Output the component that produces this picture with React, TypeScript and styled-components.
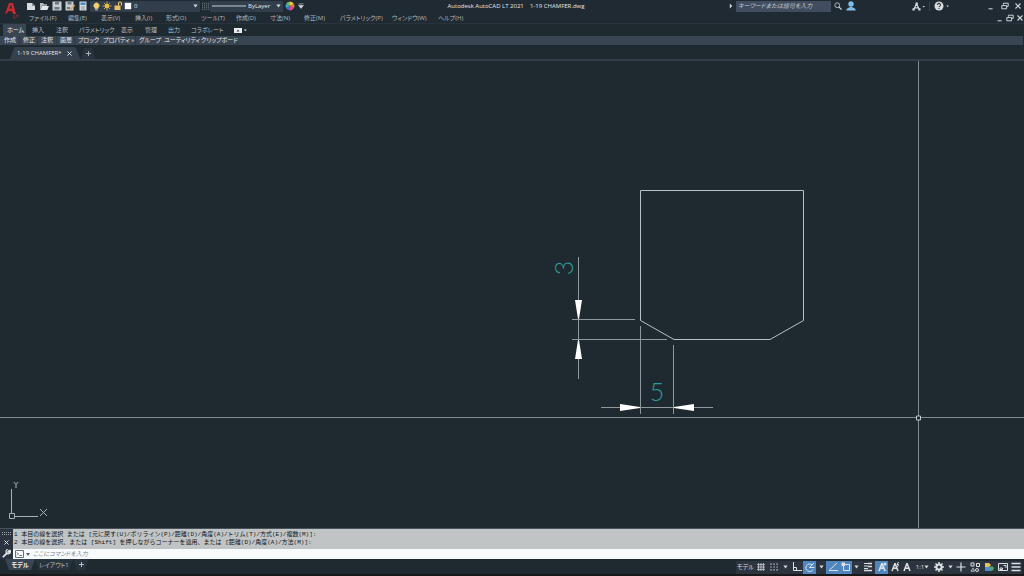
import React from 'react';
import styled, { createGlobalStyle, css } from 'styled-components';

const GlobalStyle = createGlobalStyle`
  * { box-sizing: border-box; }
  body {
    margin: 0;
    background: #1f2930;
    color: #c0c5c9;
    font-family: "Open Sans", "Noto Sans CJK JP", sans-serif;
    font-size: 6px;
    line-height: 10px;
    font-feature-settings: "palt";
  }
  button, input, select {
    font: inherit;
    font-feature-settings: inherit;
    color: inherit;
    background: none;
    border: 0;
    margin: 0;
    padding: 0;
    border-radius: 0;
    outline: 0;
  }
  svg { display: block; flex: none; }
`;

const Page = styled.div`
  display: flex;
  flex-direction: column;
  min-height: 100vh;
  overflow: hidden;
`;

const Top = styled.header`
  display: flex;
  background: #202a32;
  border-bottom: 1px solid #29333d;
`;

const AppButton = styled.button`
  width: 24px;
  height: 22px;
  flex: none;
`;

const TopRows = styled.div`
  flex: 1;
  min-width: 0;
`;

const TitleRow = styled.div`
  display: flex;
  align-items: center;
  height: 12px;
`;

const TitleSide = styled.div<{ $end?: boolean }>`
  display: flex;
  align-items: center;
  flex: 1 1 ${(p) => (p.$end ? 16 : 0)}px;
  justify-content: ${(p) => (p.$end ? 'flex-end' : 'flex-start')};
`;

const Title = styled.h1`
  margin: 0;
  font-size: 6px;
  font-weight: 500;
  white-space: pre;
  color: #e4e7e9;
`;

const ToolButton = styled.button<{ $w?: number }>`
  display: flex;
  align-items: center;
  justify-content: center;
  width: ${(p) => p.$w ?? 13}px;
  height: 11px;
  flex: none;
  color: #d5d9dc;
`;

const Combo = styled.label<{ $w: number }>`
  display: flex;
  align-items: center;
  width: ${(p) => p.$w}px;
  height: 11px;
  margin-right: 1px;
  padding: 0 2px;
  gap: 1px;
  background: #333e4c;
  color: #e4e7e9;
`;

const Picker = styled.select`
  appearance: none;
  flex: 1;
  min-width: 0;
  height: 10px;
  padding-left: 1px;
  line-height: 10px;
`;

const Search = styled.input`
  width: 95px;
  height: 11px;
  padding: 0 2px;
  background: #414d5e;
  &::placeholder { color: #c4cad0; font-style: italic; opacity: 1; }
`;

const Divider = styled.span`
  width: 1px;
  height: 9px;
  margin: 0 2px;
  background: #36414c;
`;

const MenuRow = styled.nav`
  display: flex;
  align-items: center;
  height: 11px;
  padding-left: 5px;
`;

const MenuItem = styled.button<{ $w: number }>`
  width: ${(p) => p.$w}px;
  flex: none;
  text-align: left;
  white-space: nowrap;
  color: #b3b9bd;
`;

const Spacer = styled.span<{ $w?: number }>`
  flex: ${(p) => (p.$w ? `0 0 ${p.$w}px` : '1')};
`;

const RibbonTabs = styled.div`
  display: flex;
  align-items: center;
  height: 12px;
  padding-left: 3px;
`;

const RibbonTab = styled.button<{ $w: number; $active?: boolean }>`
  width: ${(p) => p.$w}px;
  height: 12px;
  flex: none;
  padding-left: 4px;
  text-align: left;
  line-height: 12px;
  white-space: nowrap;
  color: #b9bfc3;
  ${(p) => p.$active && css`
    margin-right: 2px;
    background: #3a4553;
    color: #eceef0;
  `}
`;

const PanelRow = styled.div`
  display: flex;
  height: 9px;
  margin-right: 1px;
  padding-left: 1px;
  background: #3a4553;
`;

const Panel = styled.button<{ $w: number }>`
  width: ${(p) => p.$w}px;
  height: 9px;
  padding-left: 3px;
  line-height: 9px;
  text-align: left;
  white-space: nowrap;
  color: #e4e7e9;
  border-right: 1px solid #2f3945;
`;

const FileTabs = styled.div`
  display: flex;
  align-items: flex-end;
  height: 16px;
  padding-left: 10px;
  border-bottom: 2px solid #343d49;
`;

const FileTab = styled.div`
  display: flex;
  align-items: center;
  justify-content: space-between;
  width: 70px;
  height: 12px;
  padding: 0 8px 0 7px;
  background: #35404d;
  clip-path: polygon(0 100%, 4px 1px, 6px 0, calc(100% - 6px) 0, calc(100% - 4px) 1px, 100% 100%);
  color: #e4e7e9;
`;

const AddTab = styled.button`
  display: flex;
  align-items: center;
  justify-content: center;
  width: 14px;
  height: 11px;
  margin-left: 1px;
  background: #2a343e;
  clip-path: polygon(0 100%, 3px 0, calc(100% - 3px) 0, 100% 100%);
  color: #a9b0b5;
`;

const Canvas = styled.main`
  position: relative;
  flex: 1;
  min-height: 370px;
  overflow: hidden;
  background: #1f2a30;
`;

const Sheet = styled.svg`
  position: absolute;
  inset: 0;
  width: 100%;
  height: 100%;
`;

const UcsIcon = styled.svg`
  position: absolute;
  left: 8px;
  bottom: 0;
`;

const CommandArea = styled.section`
  display: flex;
  border-top: 1px solid #49535d;
`;

const CommandRail = styled.div`
  display: flex;
  flex-direction: column;
  align-items: center;
  justify-content: space-between;
  width: 13px;
  padding: 3px 0 1px;
  background: #2a333f;
  color: #e6e9eb;
`;

const CommandBody = styled.div`
  flex: 1;
  min-width: 0;
`;

const History = styled.div`
  height: 20px;
  padding: 2px 1px 0;
  background: #c1c4c4;
  color: #12171a;
  font-family: "Liberation Mono", "Noto Sans CJK JP", monospace;
  font-feature-settings: normal;
  line-height: 8px;
  white-space: pre;
  overflow: hidden;
`;

const Prompt = styled.label`
  display: flex;
  align-items: center;
  gap: 2px;
  height: 10px;
  padding-left: 2px;
  background: #f8fbfc;
  color: #555f66;
`;

const PromptInput = styled.input`
  flex: 1;
  height: 10px;
  margin-left: 1px;
  &::placeholder { color: #7b8388; font-style: italic; opacity: 1; }
`;

const Footer = styled.footer`
  display: flex;
  align-items: flex-start;
  justify-content: space-between;
  height: 17px;
  padding: 0 2px 0 5px;
  border-bottom: 2px solid #18191b;
  background: #1f2930;
`;

const LayoutTabs = styled.div`
  display: flex;
`;

const LayoutTab = styled.button<{ $w: number; $active?: boolean }>`
  display: flex;
  align-items: center;
  justify-content: center;
  width: ${(p) => p.$w}px;
  height: 11px;
  white-space: nowrap;
  background: ${(p) => (p.$active ? '#3a4553' : '#29333d')};
  color: ${(p) => (p.$active ? '#f0f2f3' : '#b9bfc3')};
  font-weight: ${(p) => (p.$active ? 600 : 400)};
  clip-path: polygon(0 0, 100% 0, calc(100% - 4px) 100%, 4px 100%);
`;

const StatusBar = styled.div`
  display: flex;
  align-items: center;
  height: 15px;
  padding-top: 1px;
`;

const StatusButton = styled.button<{ $w: number; $on?: boolean }>`
  display: flex;
  align-items: center;
  justify-content: center;
  width: ${(p) => p.$w}px;
  height: 13px;
  flex: none;
  white-space: nowrap;
  color: #dde0e3;
  background: ${(p) => (p.$on ? '#4f86bd' : '#2b343f')};
`;

const Caret = () => (
  <svg width="5" height="4" viewBox="0 0 5 4"><path d="M.4.5h4.2L2.5 3.5z" fill="#d5d9dc" /></svg>
);

const Plus = () => (
  <svg width="5" height="5" viewBox="0 0 5 5"><path d="M2.5 0v5M0 2.5h5" stroke="currentColor" /></svg>
);

const Cross = ({ size = 5 }: { size?: number }) => (
  <svg width={size} height={size} viewBox="0 0 6 6"><path d="M.5.5l5 5M5.5.5l-5 5" stroke="currentColor" strokeWidth="1.1" /></svg>
);

type IconProps = { children: React.ReactNode; size?: number };
const Icon = ({ children, size = 10 }: IconProps) => (
  <svg width={size} height={size} viewBox="0 0 10 10" fill="none" stroke="currentColor">{children}</svg>
);

const WindowButtons = ({ widths }: { widths: number[] }) => (
  <>
    <ToolButton $w={widths[0]} aria-label="最小化"><Icon size={8}><path d="M2 8.5h5" strokeWidth="1.3" /></Icon></ToolButton>
    <ToolButton $w={widths[1]} aria-label="元に戻す">
      <Icon size={8}><path d="M3 3.5V1.5h6v4H7.5M1 4.5h6v4H1z" strokeWidth="1.2" /></Icon>
    </ToolButton>
    <ToolButton $w={widths[2]} aria-label="閉じる"><Cross size={6} /></ToolButton>
  </>
);

const menus: [string, number][] = [
  ['ファイル(F)', 39], ['編集(E)', 33], ['表示(V)', 34], ['挿入(I)', 31], ['形式(O)', 35], ['ツール(T)', 35],
  ['作成(D)', 34], ['寸法(N)', 34], ['修正(M)', 36], ['パラメトリック(P)', 52], ['ウィンドウ(W)', 46], ['ヘルプ(H)', 30],
];

const ribbonTabs: [string, number][] = [
  ['ホーム', 23], ['挿入', 24], ['注釈', 23], ['パラメトリック', 42], ['表示', 24], ['管理', 23], ['出力', 23], ['コラボレート', 44],
];

const panels: [string, number][] = [
  ['作成', 19], ['修正', 18], ['注釈', 19], ['画層', 18], ['ブロック', 25], ['プロパティ »', 36],
  ['グループ', 25], ['ユーティリティ', 37], ['クリップボード', 40],
];

const scaleFigure = 'M5 1.2L2 9M5 1.2L8 9M3.2 6.2h3.6';

export default function App() {
  return (
    <Page>
      <GlobalStyle />
      <Top>
        <AppButton aria-label="アプリケーション メニュー">
          <svg width="24" height="22" viewBox="0 0 24 22">
            <path d="M5 14L9 3h4l3 11h-3l-1-3H8.500l-1 2z" fill="#c92a2f" />
            <path d="M9.300 8.500L11 4.500l1 4z" fill="#202a32" />
            <path d="M5 14l3-2.500 4-.5-4 1.300z" fill="#7e1c22" />
            <path d="M14 15v3h1.500M16.200 15.300h2M17.200 15v3" fill="none" stroke="#b5282d" strokeWidth=".8" />
          </svg>
        </AppButton>
        <TopRows>
          <TitleRow>
            <TitleSide>
              <ToolButton aria-label="新規">
                <Icon><path d="M1 2h5l3 3v4H1z" fill="#d9dcde" stroke="none" /><path d="M6 2v3h3z" fill="#8a9299" stroke="none" /></Icon>
              </ToolButton>
              <ToolButton aria-label="開く">
                <Icon><path d="M1 8.500V2h3l1 1.200h3v1.500H3z" fill="#b5bbbf" stroke="none" /><path d="M3 5h7L8.300 9H1z" fill="#e4e6e8" stroke="none" /></Icon>
              </ToolButton>
              <ToolButton aria-label="上書き保存">
                <Icon><path d="M.5.5h9v9h-9z" fill="#c8cdd0" stroke="none" /><path d="M3 1h4v2.500H3zM2.500 6h5v2.500h-5z" fill="#6d7780" stroke="none" /></Icon>
              </ToolButton>
              <ToolButton aria-label="名前を付けて保存">
                <Icon><path d="M.5.5h8v9h-8z" fill="#c8cdd0" stroke="none" /><path d="M2.500 1h4v2.500h-4zM2 6h3v2H2z" fill="#6d7780" stroke="none" /><path d="M5 9L9.500 4" stroke="#e0a667" strokeWidth="1.800" /></Icon>
              </ToolButton>
              <ToolButton $w={14} aria-label="印刷">
                <Icon><path d="M1.500.5h7v9h-7z" fill="#d9dcde" stroke="none" /><path d="M2.500 1.500h5v2.500h-5z" fill="#4a8cc4" stroke="none" /><path d="M3 6h4M3 8h4" stroke="#8a9299" /></Icon>
              </ToolButton>
              <Combo $w={110}>
                <Icon size={9}><path d="M3 6.500a3.200 3.200 0 1 1 4 0v1H3z" fill="#f0d070" stroke="none" /><path d="M3.500 8.700h3" stroke="#d5d9dc" /></Icon>
                <Icon><circle cx="5" cy="5" r="2.300" fill="#f1bf4f" stroke="none" /><path d="M5 .5v9M.5 5h9M2 2l6 6M8 2L2 8" stroke="#e5b850" strokeWidth=".8" /></Icon>
                <Icon><path d="M1.500 4.500h6v4.500h-6z" fill="#e8bf62" stroke="none" /><path d="M5.500 4.500v-2a1.500 1.500 0 0 1 3 0v2" stroke="#e8bf62" strokeWidth="1.200" /></Icon>
                <Icon size={8}><path d="M1 1h8v8H1z" fill="#fff" stroke="none" /></Icon>
                <Picker aria-label="画層"><option>0</option></Picker>
                <Caret />
              </Combo>
              <ToolButton $w={9} aria-label="画層プロパティ">
                <Icon size={8}><path d="M0 1.500h10M0 4h10M0 6.500h10M0 9h10" stroke="#8c959c" strokeDasharray="1.500 1" /></Icon>
              </ToolButton>
              <Combo $w={73}>
                <svg width="34" height="2" viewBox="0 0 34 2"><path d="M0 1h34" stroke="#c8cdd0" /></svg>
                <Picker aria-label="線種"><option>ByLayer</option></Picker>
                <Caret />
              </Combo>
              <ToolButton $w={11} aria-label="色">
                <Icon>
                  <g stroke="none">
                    <path d="M5 5V.5a4.500 4.500 0 0 1 4 2.500z" fill="#f5c443" />
                    <path d="M5 5l4-2a4.500 4.500 0 0 1 0 4z" fill="#ef7d3b" />
                    <path d="M5 5l4 2a4.500 4.500 0 0 1-4 2.500z" fill="#d94f8b" />
                    <path d="M5 5v4.500A4.500 4.500 0 0 1 1 7z" fill="#5b62d0" />
                    <path d="M5 5L1 7a4.500 4.500 0 0 1 0-4z" fill="#2fb0d2" />
                    <path d="M5 5L1 3A4.500 4.500 0 0 1 5 .5z" fill="#6fc561" />
                  </g>
                </Icon>
              </ToolButton>
              <ToolButton $w={11} aria-label="カスタマイズ"><Icon size={6}><path d="M1 1.500h8M1 4h8L5 9z" fill="currentColor" /></Icon></ToolButton>
            </TitleSide>
            <Title>{'Autodesk AutoCAD LT 2021    1-19 CHAMFER.dwg'}</Title>
            <TitleSide $end>
              <ToolButton $w={10} aria-label="検索を展開"><Icon size={6}><path d="M3 1l4 4-4 4z" fill="#d5d9dc" stroke="none" /></Icon></ToolButton>
              <Search aria-label="検索" placeholder="キーワードまたは語句を入力" />
              <ToolButton aria-label="検索する"><Icon size={8}><circle cx="4" cy="4" r="3" /><path d="M6.200 6.200L9.500 9.500" strokeWidth="1.500" /></Icon></ToolButton>
              <ToolButton aria-label="サインイン"><Icon><g fill="#7dbde8" stroke="none"><circle cx="5" cy="3" r="2.700" /><path d="M.5 9.500V8L4 6h2l3.500 2v1.500z" /></g></Icon></ToolButton>
              <Spacer $w={53} />
              <ToolButton $w={17} aria-label="Autodesk App Store">
                <Icon size={9}><path d="M5 2L2 8M5 2l3 6M2.500 6.500h5" strokeWidth="1.300" /><path d="M4 .5h2.500V3H4zM.5 7H3v2.500H.5zM7 7h2.500v2.500H7z" fill="currentColor" stroke="none" /></Icon>
                <Icon size={5}><path d="M3 4h5L5.500 7z" fill="currentColor" stroke="none" /></Icon>
              </ToolButton>
              <Divider />
              <ToolButton $w={20} aria-label="ヘルプ">
                <Icon size={10}><circle cx="5" cy="5" r="4.500" fill="#d9dcde" stroke="none" /><path d="M3.500 4a1.500 1.500 0 1 1 2 1.300L5 6M5 7v1" stroke="#333e4a" strokeWidth="1.100" /></Icon>
                <Icon size={6}><path d="M4 4h4L6 7z" fill="currentColor" stroke="none" /></Icon>
              </ToolButton>
              <Spacer $w={32} />
              <WindowButtons widths={[14, 13, 13]} />
            </TitleSide>
          </TitleRow>
          <MenuRow>
            {menus.map(([label, w]) => <MenuItem key={label} $w={w}>{label}</MenuItem>)}
            <Spacer />
            <WindowButtons widths={[10, 10, 9]} />
          </MenuRow>
        </TopRows>
      </Top>

      <RibbonTabs>
        {ribbonTabs.map(([label, w], i) => <RibbonTab key={label} $w={w} $active={i === 0}>{label}</RibbonTab>)}
        <ToolButton $w={20} aria-label="リボンの表示">
          <svg width="8" height="5" viewBox="0 0 8 5"><path d="M0 0h8v5H0z" fill="#eceeef" /><path d="M2.500 3.500h3L4 1.500z" fill="#35404d" /></svg>
          <Icon size={6}><path d="M3 4h5L5.500 7z" fill="currentColor" stroke="none" /></Icon>
        </ToolButton>
      </RibbonTabs>
      <PanelRow>
        {panels.map(([label, w]) => <Panel key={label} $w={w}>{label}</Panel>)}
      </PanelRow>
      <FileTabs>
        <FileTab><span>1-19 CHAMFER*</span><Cross /></FileTab>
        <AddTab aria-label="新しい図面"><Plus /></AddTab>
      </FileTabs>

      <Canvas>
        <Sheet fill="none" stroke="#b9bfc2">
          <path d="M640.500 129.500h163v130l-33.500 19h-96l-33.500-19z" />
          <path d="M578.500 196v122M572 258.500h63M572 278.500h95M640.500 265v88M673.500 284v69M601 346.500h112" stroke="#8f989d" />
          <g fill="#fff" stroke="none">
            <path d="M575 239h7l-3 19h-1zM575 298h7l-3-19h-1zM620 343v7l20-3v-1zM694 343v7l-20-3v-1z" />
          </g>
          <g fill="#2a9c9a" stroke="none" fontFamily="Lato, sans-serif" fontWeight="300" fontSize="25" textAnchor="middle">
            <text x="657" y="340">5</text>
            <text transform="translate(573 207) rotate(-90)">3</text>
          </g>
          <g stroke="#7f898e">
            <path d="M918.500 0V355M918.500 359V2000" />
            <path d="M0 356.500H916M920 356.500H6000" />
            <path d="M916.500 355h4v4h-4z" stroke="#c3c8ca" />
          </g>
        </Sheet>
        <UcsIcon width="42" height="46" viewBox="0 0 42 46" fill="none" stroke="#a9b1b5">
          <path d="M3.500 7v24M6 34.500h24M1.500 31.500h5v5h-5z" />
          <path d="M5 -1l3 3.500L11 -1M8 2.500V6M32 27l7 7M39 27l-7 7" />
        </UcsIcon>
      </Canvas>

      <CommandArea>
        <CommandRail>
          <svg width="9" height="3" viewBox="0 0 9 3"><path d="M0 .5h9M0 2.500h9" stroke="#9aa2a8" strokeDasharray="1 1" /></svg>
          <Cross />
          <Icon size={9}><path d="M1 9l5-5" strokeWidth="1.800" /><path d="M8.500 1L6.500 3l.8.8L9.300 2a2.500 2.500 0 1 1-3-1.500" strokeWidth="1.300" /></Icon>
        </CommandRail>
        <CommandBody>
          <History>
            <div>1 本目の線を選択 または [元に戻す(U)/ポリライン(P)/距離(D)/角度(A)/トリム(T)/方式(E)/複数(M)]:</div>
            <div>2 本目の線を選択、または [Shift] を押しながらコーナーを適用、または [距離(D)/角度(A)/方法(M)]:</div>
          </History>
          <Prompt>
            <svg width="9" height="8" viewBox="0 0 9 8" fill="none" stroke="currentColor"><path d="M.5.5h8v7h-8zM2 2.500L3.500 4 2 5.500M4.500 5.500h2.500" strokeWidth=".9" /></svg>
            <svg width="4" height="3" viewBox="0 0 4 3"><path d="M0 0h4L2 3z" fill="currentColor" /></svg>
            <PromptInput aria-label="コマンド" placeholder="ここにコマンドを入力" />
          </Prompt>
        </CommandBody>
      </CommandArea>

      <Footer>
        <LayoutTabs>
          <LayoutTab $w={30} $active>モデル</LayoutTab>
          <LayoutTab $w={38}>レイアウト1</LayoutTab>
          <LayoutTab $w={16} aria-label="新しいレイアウト"><Plus /></LayoutTab>
        </LayoutTabs>
        <StatusBar>
          <StatusButton $w={19}>モデル</StatusButton>
          <StatusButton $w={12} aria-label="グリッド"><Icon size={8}><path d="M2 0v10M5 0v10M8 0v10M0 2h10M0 5h10M0 8h10" strokeWidth=".9" /></Icon></StatusButton>
          <StatusButton $w={13} aria-label="スナップ"><Icon size={8}><path d="M.5 1.500h10M.5 5h10M.5 8.500h10" strokeWidth="1.500" strokeDasharray="1.500 2.300" /></Icon></StatusButton>
          <StatusButton $w={10} aria-label="スナップ設定"><Caret /></StatusButton>
          <StatusButton $w={13} aria-label="直交モード"><Icon><path d="M1.500 0v8.500H10M1.500 5.500h3v3" /></Icon></StatusButton>
          <StatusButton $w={13} $on aria-label="極トラッキング"><Icon><path d="M8 7.500A3.800 3.800 0 1 1 7 2.800M4.500 5.500H9.500M4.500 5.500L9 1" /></Icon></StatusButton>
          <StatusButton $w={10} aria-label="極設定"><Caret /></StatusButton>
          <StatusButton $w={13} $on aria-label="オブジェクト スナップ トラッキング"><Icon><path d="M9 1L1 8.500h9" /></Icon></StatusButton>
          <StatusButton $w={13} $on aria-label="オブジェクト スナップ"><Icon><path d="M2.500 2.500h6v6h-6z" /><path d="M.5.5h3.500v3.500H.5z" fill="currentColor" stroke="none" /></Icon></StatusButton>
          <StatusButton $w={9} aria-label="スナップ点"><Caret /></StatusButton>
          <StatusButton $w={14} aria-label="線の太さ"><Icon><path d="M1 1.500h4M1 4h4M1 6.500h4" /><path d="M5 1.500h4M5 4.500h4" strokeWidth="1.500" /><path d="M1 8.500h8" strokeWidth="1.500" /></Icon></StatusButton>
          <StatusButton $w={13} $on aria-label="注釈オブジェクトを表示"><Icon><path d={scaleFigure} strokeWidth="1.700" /><circle cx="8" cy="2" r="1.600" fill="currentColor" stroke="none" /></Icon></StatusButton>
          <StatusButton $w={13} aria-label="自動尺度"><Icon><path d={scaleFigure} strokeWidth="1.500" /><path d="M8.500 0L7 2.500h1.500L7.500 5" /></Icon></StatusButton>
          <StatusButton $w={12} aria-label="注釈尺度"><Icon><path d={scaleFigure} strokeWidth="1.500" /></Icon></StatusButton>
          <StatusButton $w={19}>1:1<Caret /></StatusButton>
          <StatusButton $w={14} aria-label="ワークスペース"><Icon><circle cx="5" cy="5" r="2.600" strokeWidth="2" /><path d="M5 0v2M5 8v2M0 5h2M8 5h2M1.500 1.500l1.500 1.500M7 7l1.500 1.500M8.500 1.500L7 3M3 7L1.500 8.500" strokeWidth="1.500" /></Icon></StatusButton>
          <StatusButton $w={8} aria-label="ワークスペース設定"><Caret /></StatusButton>
          <StatusButton $w={14} aria-label="注釈モニター"><Icon><path d="M5 .5v9M.5 5h9" strokeWidth="1.200" /></Icon></StatusButton>
          <StatusButton $w={14} aria-label="オブジェクトを選択表示"><Icon><path d="M1 1h3v3H1zM6.500 1.500h3v3h-3z" /><circle cx="7" cy="8" r="1.500" /><path d="M1 9.200l2-3 1.500 3z" strokeWidth=".8" /></Icon></StatusButton>
          <StatusButton $w={14} aria-label="グラフィックス パフォーマンス"><Icon><path d="M1 1h4l2 2-2 2H1z" fill="#e5c35e" stroke="none" /><path d="M1 5h6v4H1z" fill="#4a8fd6" stroke="none" /><circle cx="7.500" cy="6.500" r="2.300" fill="#52a56a" stroke="none" /></Icon></StatusButton>
          <StatusButton $w={14} aria-label="フルスクリーン表示"><Icon><path d="M.5 1.500h9v7h-9z" /><path d="M2 6h2.500v1.500H2zM5.500 3.500H8V6" /></Icon></StatusButton>
          <StatusButton $w={12} aria-label="カスタマイズ"><Icon><path d="M.5 1.500h9M.5 5h9M.5 8.500h9" strokeWidth="1.300" /></Icon></StatusButton>
        </StatusBar>
      </Footer>
    </Page>
  );
}
